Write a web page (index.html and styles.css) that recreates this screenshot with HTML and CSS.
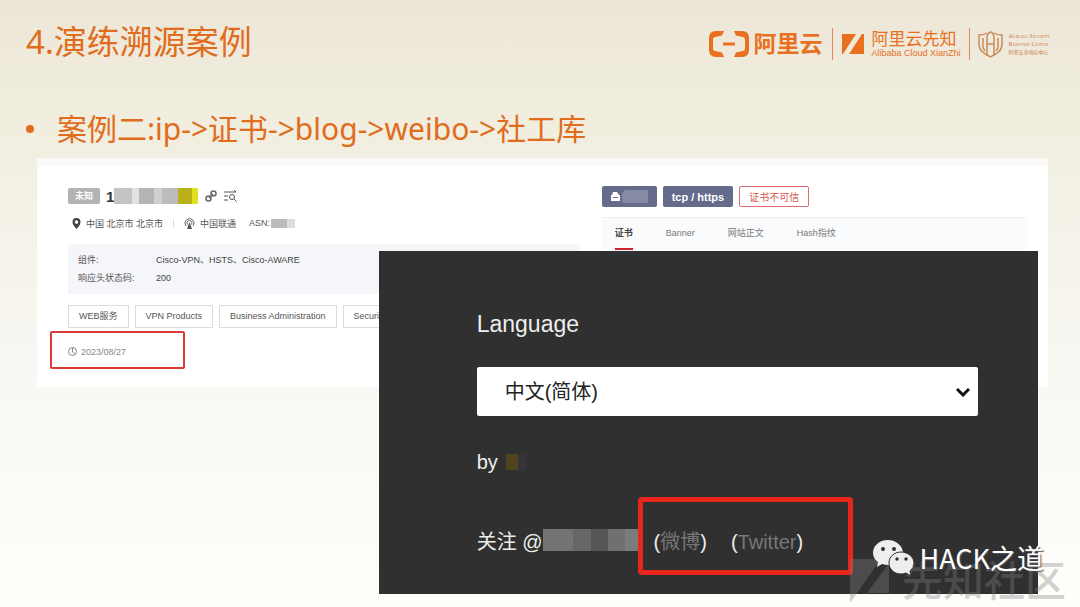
FILE: index.html
```html
<!DOCTYPE html>
<html lang="zh-CN">

<head>
    <meta charset="UTF-8" />
    <meta name="viewport" content="width=device-width, initial-scale=1.0" />
    <title>演练溯源案例</title>
    <link rel="stylesheet" href="styles.css">
</head>

<body>
    <header class="slide-header">
        <h1>4.演练溯源案例</h1>
        <div class="logos">
            <div class="logo aliyun">
                <svg width="42" height="26" viewBox="0 0 42 26" fill="#e8701f">
                    <path d="M16 0l-2 4.500-7 1.500q-2 .5-2 2.500v9q0 2 2 2.500l7 1.500 2 4.500H8q-7 0-7-7V7q0-7 7-7zM26 0l2 4.500 7 1.500q2 .5 2 2.500v9q0 2-2 2.500l-7 1.500-2 4.500h8q7 0 7-7V7q0-7-7-7zM15 11.500h12v3H15z" />
                </svg>
                <span>阿里云</span>
            </div>
            <div class="logo xianzhi">
                <svg width="22" height="22" viewBox="0 0 22 22" fill="#e8701f">
                    <path d="M0 1h14L1 21H0zM20 1h2v20H7z" />
                </svg>
                <div>
                    <div class="cn">阿里云先知</div>
                    <div class="en">Alibaba Cloud XianZhi</div>
                </div>
            </div>
            <div class="logo asrc">
                <svg width="25" height="27" viewBox="0 0 25 27" fill="none" stroke="#c98a5c" stroke-width="1.500">
                    <path d="M9 2Q6 4 1 4v9q0 7 8 11M16 2q3 2 8 2v9q0 7-8 11" />
                    <path d="M9 24V7q0-5 3.500-6Q16 2 16 7v17l-3.500 2zM9 13h7M5 7v8q0 3 2 5M20 7v8q0 3-2 5" />
                </svg>
                <div>
                    <div class="caps">Alibaba Security</div>
                    <div class="caps">Response Center</div>
                    <div class="small">阿里安全响应中心</div>
                </div>
            </div>
        </div>
    </header>

    <ul class="steps">
        <li>案例二:ip-&gt;证书-&gt;blog-&gt;weibo-&gt;社工库</li>
    </ul>

    <main class="stage">
        <div class="result">
            <section class="host">
                <div class="host-title">
                    <span class="unknown">未知</span>
                    <span class="ip">1</span>
                    <span class="mosaic ip-mosaic"></span>
                    <svg width="12" height="12" viewBox="0 0 12 12" fill="none" stroke="#666" stroke-width="1.500">
                        <circle cx="3.500" cy="8.500" r="2.500" />
                        <circle cx="8.500" cy="3.500" r="2.500" />
                        <path d="M4 8l4-4" />
                    </svg>
                    <svg width="13" height="12" viewBox="0 0 13 12" fill="none" stroke="#555">
                        <path d="M0 2h12M10 0l2 2M0 6h4M0 10h4M10 9l2.500 2.500" />
                        <circle cx="8" cy="7" r="2.500" />
                    </svg>
                </div>

                <div class="place">
                    <svg width="9" height="11" viewBox="0 0 9 11" fill="#444">
                        <path fill-rule="evenodd" d="M4.500 0a4 4 0 0 1 4 4Q8.500 7 4.500 11 .5 7 .5 4a4 4 0 0 1 4-4zm0 2.300a1.800 1.800 0 1 0 0 3.600 1.800 1.800 0 0 0 0-3.600z" />
                    </svg>
                    <span>中国 北京市 北京市</span>
                    <i class="line"></i>
                    <svg width="11" height="11" viewBox="0 0 11 11" fill="none" stroke="#666">
                        <path d="M2 8a4.500 4.500 0 1 1 7 0M3.500 6.500a2.500 2.500 0 1 1 4 0" />
                        <path d="M5.500 4l2.500 7H3z" fill="#555" stroke="none" />
                    </svg>
                    <span>中国联通</span>
                    <span class="asn">ASN:</span>
                    <span class="mosaic asn-mosaic"></span>
                </div>

                <dl class="info">
                    <dt>组件:</dt>
                    <dd>Cisco-VPN、HSTS、Cisco-AWARE</dd>
                    <dt>响应头状态码:</dt>
                    <dd>200</dd>
                </dl>

                <div class="tags">
                    <span>WEB服务</span>
                    <span>VPN Products</span>
                    <span>Business Administration</span>
                    <span>Security</span>
                </div>

                <div class="date">
                    <svg width="9" height="9" viewBox="0 0 9 9" fill="none" stroke="#888">
                        <circle cx="4.500" cy="4.500" r="4" />
                        <path d="M4.500 1v4l2 1.500" />
                    </svg>
                    <time>2023/08/27</time>
                </div>
            </section>

            <section class="service">
                <div class="badges">
                    <span class="badge port">
                        <svg width="9" height="9" viewBox="0 0 9 9" fill="#fff">
                            <path fill-rule="evenodd" d="M2 0h4l2 3h1v6H0V3h1zM2 5v1h5V5z" />
                        </svg>
                        <i class="port-mosaic"></i>
                    </span>
                    <span class="badge">tcp / https</span>
                    <span class="badge untrusted">证书不可信</span>
                </div>
                <nav class="tabs">
                    <a href="#" class="active">证书</a>
                    <a href="#">Banner</a>
                    <a href="#">网站正文</a>
                    <a href="#">Hash指纹</a>
                </nav>
            </section>
        </div>

        <section class="blog">
            <label for="language">Language</label>
            <select id="language">
                <option>中文(简体)</option>
            </select>
            <div class="by">by <span class="by-mosaic"></span></div>
            <div class="follow">
                <span class="name">关注 @</span>
                <span class="follow-mosaic"></span>
                <div class="links">
                    <span>(<a href="#">微博</a>)</span>
                    <span>(<a href="#">Twitter</a>)</span>
                </div>
            </div>
        </section>
    </main>

    <div class="community">
        <svg width="44" height="44" viewBox="0 0 44 44" fill="#808080">
            <path d="M0 0h31L0 44zM39 4v30H17z" />
        </svg>
        <span>先知社区</span>
    </div>

    <div class="account">
        <svg width="42" height="36" viewBox="0 0 42 36">
            <path fill="#eee" d="M15 0C6 0 0 6 0 13c0 4 2 7 5 9l-1 5 5-3q3 1 7 1c8 0 14-5 14-12S23 0 15 0z" />
            <path fill="#eee" stroke="#303030" d="M28 12c-7 0-12 5-12 11s5 11 12 11q3 0 5-1l5 3-1-5q4-3 4-8c0-6-6-11-13-11z" />
            <g fill="#303030">
                <circle cx="10" cy="9" r="2" />
                <circle cx="21" cy="9" r="2" />
                <circle cx="24" cy="19" r="1.700" />
                <circle cx="33" cy="19" r="1.700" />
            </g>
        </svg>
        <span>HACK之道</span>
    </div>
</body>

</html>
```

FILE: styles.css
```css
* {
    box-sizing: border-box;
}

body {
    margin: 0;
    min-height: 100vh;
    position: relative;
    overflow: hidden;
    font-family: "Liberation Sans", "Noto Sans CJK SC", sans-serif;
    background: linear-gradient(#ede6d8 0, #f0eddd 16%, #f4f1e7 35%, #f9f8f4 65%, #fefefa 100%);
}

.slide-header {
    display: flex;
    justify-content: space-between;
    padding: 18px 30px 0 26px;
}

h1 {
    margin: 0;
    font: 400 33px/48px "Noto Sans", "Noto Sans CJK SC", sans-serif;
    color: #e06c1c;
}

/* logos */
.logos {
    display: flex;
    align-items: center;
    height: 52px;
    color: #e8701f;
}

.logo {
    display: flex;
    align-items: center;
    height: 32px;
}

.aliyun {
    gap: 4px;
    padding-right: 9px;
    font-size: 23px;
    line-height: 28px;
    font-weight: 700;
}

.xianzhi {
    gap: 8px;
    padding: 0 8px 0 9px;
    border-left: 1px solid #e08a50;
    border-right: 1px solid #e08a50;
}

.cn {
    font-size: 17px;
    line-height: 18px;
}

.en {
    font-size: 9px;
    line-height: 9px;
}

.asrc {
    gap: 6px;
    padding-left: 8px;
    color: #c97a45;
}

.caps {
    font: 6px/8px "Liberation Serif", serif;
    font-variant: small-caps;
}

.small {
    font-size: 5px;
    line-height: 8px;
}

/* bullet line */
.steps {
    list-style: none;
    margin: 0;
    padding: 39px 26px 9px;
    font: 400 30px/40px "Noto Sans", "Noto Sans CJK SC", sans-serif;
    color: #e06c1c;
}

.steps li {
    display: flex;
    align-items: center;
    gap: 23px;
}

.steps li::before {
    content: "";
    width: 8px;
    height: 8px;
    border-radius: 50%;
    background: #e06c1c;
}

/* pasted screenshots */
.stage {
    position: relative;
    margin: 0 32px 0 37px;
}

.result {
    display: grid;
    grid-template-columns: 6fr 5fr;
    gap: 22px;
    padding: 20px 20px 18px 31px;
    background: #fff;
    border-top: 8px solid #fafaf8;
    font-size: 9px;
    color: #555;
}

.host,
.service {
    min-width: 0;
}

.host-title {
    display: flex;
    align-items: center;
    height: 20px;
}

.host-title svg {
    margin-left: 7px;
}

.unknown {
    width: 32px;
    line-height: 16px;
    text-align: center;
    font-weight: 700;
    color: #fff;
    background: #b3b3b3;
    border-radius: 2px;
}

.ip {
    margin-left: 6px;
    font-size: 15px;
    font-weight: 700;
    color: #333;
}

.ip-mosaic {
    width: 84px;
    height: 16px;
    background: linear-gradient(90deg, #c4c4c4 18px, #e2e2e2 18px 25px, #b5b5b5 25px 40px, #d0d0d0 40px 48px, #bcbcbc 48px 64px, #b9b01c 64px 78px, #dfe21c 78px);
}

.place {
    display: flex;
    align-items: center;
    gap: 5px;
    height: 16px;
    margin: 9px 0 13px 4px;
}

.line {
    width: 1px;
    height: 9px;
    margin: 0 5px;
    background: #ddd;
}

.asn {
    margin-left: 8px;
}

.asn-mosaic {
    width: 24px;
    height: 9px;
    margin-left: -4px;
    background: linear-gradient(90deg, #bbb 16px, #ddd 16px);
}

.info {
    display: grid;
    grid-template-columns: 78px 1fr;
    margin: 0 0 11px;
    padding: 7px 10px;
    line-height: 18px;
    background: #f5f6fa;
}

.info dd {
    margin: 0;
    color: #444;
}

.tags {
    display: flex;
    gap: 6px;
    overflow: hidden;
}

.tags span {
    padding: 0 10px;
    line-height: 21px;
    white-space: nowrap;
    border: 1px solid #ddd;
}

.date {
    display: flex;
    align-items: center;
    gap: 4px;
    width: 135px;
    height: 38px;
    margin: 3px 0 0 -18px;
    padding: 3px 0 0 16px;
    border: 2px solid #dc3c35;
    border-radius: 2px;
    color: #888;
}

.badges {
    display: flex;
    gap: 6px;
}

.badge {
    display: flex;
    align-items: center;
    height: 21px;
    padding: 0 9px;
    border-radius: 2px;
    font-size: 11px;
    font-weight: 700;
    color: #fff;
    background: #646b8b;
}

.port {
    gap: 2px;
}

.port-mosaic {
    width: 26px;
    height: 13px;
    background: #858ba4;
    border-radius: 5px 0 0 3px;
}

.untrusted {
    font-size: 10px;
    font-weight: 400;
    color: #d9534f;
    background: #fff;
    border: 1px solid #dd6c6c;
}

.tabs {
    display: flex;
    gap: 33px;
    height: 34px;
    margin-top: 10px;
    padding: 0 13px;
    line-height: 30px;
    background: #fafbfc;
    border-top: 1px solid #f0f0f0;
}

.tabs a {
    height: 32px;
    color: #777;
    text-decoration: none;
}

.tabs .active {
    font-weight: 700;
    color: #444;
    border-bottom: 2px solid #d0202c;
}

/* blog footer, lies over the scan result */
.blog {
    position: absolute;
    top: 93px;
    left: 33.8%;
    right: 10px;
    padding: 58px 60px 19px 98px;
    background: #303030;
    color: #eee;
    font-size: 20px;
}

.blog label {
    display: block;
    font-size: 23px;
    line-height: 30px;
}

.blog select {
    display: block;
    appearance: none;
    width: 100%;
    height: 49px;
    margin: 28px 0 32px;
    padding: 0 28px;
    border: 0;
    border-radius: 2px;
    font: 20px "Liberation Sans", "Noto Sans CJK SC", sans-serif;
    color: #222;
    background: #fff url("data:image/svg+xml,%3Csvg xmlns='http://www.w3.org/2000/svg' width='14' height='10' fill='none' stroke='%23111' stroke-width='3'%3E%3Cpath d='M1 2l6 6 6-6'/%3E%3C/svg%3E") no-repeat right 8px center;
}

.by {
    display: flex;
    align-items: center;
    gap: 8px;
    height: 28px;
}

.by-mosaic {
    width: 20px;
    height: 16px;
    background: linear-gradient(90deg, #51431f 12px, #35343b 12px);
}

.follow {
    display: flex;
    align-items: center;
    margin-top: 21px;
    white-space: nowrap;
}

.name {
    padding-top: 9px;
}

.follow-mosaic {
    width: 95px;
    height: 22px;
    margin-top: 7px;
    background: linear-gradient(90deg, #747474 30px, #666 30px 48px, #555 48px 65px, #707070 65px 82px, #7c7c7c 82px);
}

.links {
    display: flex;
    gap: 24px;
    width: 215px;
    height: 78px;
    padding: 0 11px;
    border: 5px solid #e8261c;
    border-radius: 4px;
    line-height: 80px;
}

.links a {
    color: #777;
    text-decoration: none;
}

/* watermarks */
.community,
.account {
    position: absolute;
    display: flex;
    align-items: center;
    white-space: nowrap;
}

.community {
    right: 14px;
    bottom: 4px;
    gap: 8px;
    height: 44px;
    font: 500 41px/38px "Noto Sans CJK SC", sans-serif;
    color: #808080;
    opacity: 0.35;
}

.community span {
    padding-bottom: 6px;
}

.account {
    right: 36px;
    bottom: 31px;
    gap: 5px;
    font: 400 27px/36px "Noto Sans CJK SC", sans-serif;
    color: #fff;
    text-shadow: 1px 1px 1px #555;
}
```
